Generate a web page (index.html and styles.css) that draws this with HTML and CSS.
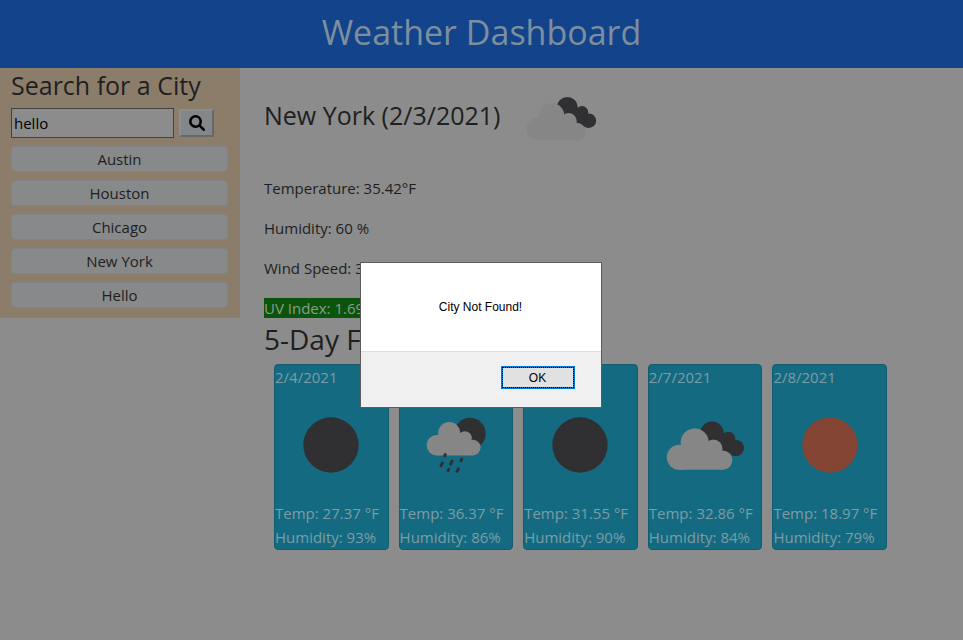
FILE: index.html
```html
<!DOCTYPE html>
<html lang="en">
<head>
<meta charset="utf-8">
<meta name="viewport" content="width=device-width, initial-scale=1">
<title>Weather Dashboard</title>
<link rel="stylesheet" href="styles.css">
</head>
<body>
<svg class="defs" aria-hidden="true">
  <symbol id="clouds" viewBox="0 0 100 100">
    <g class="dark"><circle cx="57" cy="38.3" r="11.7"/><circle cx="73.3" cy="43.7" r="7"/><circle cx="81" cy="53" r="8"/><path d="M57 28L70 42L80 50L80 61L60 54Z"/></g>
    <g class="cloud"><circle cx="24.3" cy="62.3" r="12.5"/><circle cx="39.7" cy="47.5" r="14"/><circle cx="58.5" cy="53.5" r="9"/><circle cx="67.7" cy="65.1" r="9.7"/><path d="M24.3 74.8V50H60L67.7 60V74.8Z"/></g>
  </symbol>
  <symbol id="rain" viewBox="0 0 100 100">
    <circle class="dark" cx="64" cy="38.5" r="15.7"/>
    <g class="cloud"><circle cx="30.8" cy="50.2" r="10.2"/><circle cx="43.2" cy="38" r="11"/><circle cx="58.8" cy="43.2" r="7"/><circle cx="66.8" cy="52.6" r="7.8"/><path d="M30.8 60.4V40H60L66.8 48V60.4Z"/></g>
    <path class="drops" d="M39.3 59.5L38.7 60.7M36.4 68L35 70.8M46 66.3L44.6 69M55.6 64.4L55 65.6M42.7 74.4L42.1 75.6M52.4 73.7L51 76.3"/>
  </symbol>
  <symbol id="disc" viewBox="0 0 100 100"><circle cx="50" cy="50" r="27.7"/></symbol>
</svg>

<header class="banner"><h1>Weather Dashboard</h1></header>

<div class="layout">
  <aside class="sidebar">
    <h2><label for="city">Search for a City</label></h2>
    <form class="search">
      <input id="city" type="text" value="hello">
      <button type="button" aria-label="Search">
        <svg viewBox="0 0 16 16" width="16" height="16" aria-hidden="true"><circle cx="6.5" cy="6.5" r="5.2"/><path d="M10.4 10.4L14.7 14.7"/></svg>
      </button>
    </form>
    <div class="cities">
      <button type="button">Austin</button>
      <button type="button">Houston</button>
      <button type="button">Chicago</button>
      <button type="button">New York</button>
      <button type="button">Hello</button>
    </div>
  </aside>

  <main class="main">
    <div class="current">
      <h2>New York (2/3/2021)</h2>
      <svg class="current-icon"><use href="#clouds"/></svg>
    </div>
    <p>Temperature: 35.42°F</p>
    <p>Humidity: 60 %</p>
    <p>Wind Speed: 3</p>
    <p class="uv"><span>UV Index: 1.69</span></p>
    <h2 class="forecast-title">5-Day Forecast:</h2>
    <div class="forecast">
      <article><div class="date">2/4/2021</div><svg class="dark"><use href="#disc"/></svg><div>Temp: 27.37 °F</div><div>Humidity: 93%</div></article>
      <article><div class="date"></div><svg><use href="#rain"/></svg><div>Temp: 36.37 °F</div><div>Humidity: 86%</div></article>
      <article><div class="date"></div><svg class="dark"><use href="#disc"/></svg><div>Temp: 31.55 °F</div><div>Humidity: 90%</div></article>
      <article><div class="date">2/7/2021</div><svg><use href="#clouds"/></svg><div>Temp: 32.86 °F</div><div>Humidity: 84%</div></article>
      <article><div class="date">2/8/2021</div><svg class="sun"><use href="#disc"/></svg><div>Temp: 18.97 °F</div><div>Humidity: 79%</div></article>
    </div>
  </main>
</div>

<div class="alert" role="alertdialog" aria-labelledby="alert-text">
  <p id="alert-text">City Not Found!</p>
  <div class="alert-actions"><button type="button">OK</button></div>
</div>
</body>
</html>
```
FILE: styles.css
```css
* { box-sizing: border-box; }

body {
  margin: 0;
  min-height: 100vh;
  background: #8c8c8c;
  color: #1d1f21;
  font: 15px/24px "Open Sans", "Noto Sans", sans-serif;
}

h1, h2, p { margin: 0; font-weight: 400; }

button, input { font: inherit; color: inherit; }

.defs { position: absolute; width: 0; height: 0; }

.dark { fill: #302f31; }
.sun { fill: #854535; }
.cloud { fill: #868686; }
.drops { fill: none; stroke: #302f31; stroke-width: 3; stroke-linecap: round; }

.banner {
  height: 68px;
  background: #13438a;
  color: #7d8f9f;
  text-align: center;
}

.banner h1 { font-size: 34px; line-height: 64px; }

.layout { display: flex; align-items: flex-start; }

.sidebar {
  flex: 0 0 240px;
  padding: 0 12px 10px 11px;
  background: #8c7d6b;
}

.sidebar h2 { font-size: 25px; line-height: 34px; padding-bottom: 6px; }

.search { display: flex; align-items: center; gap: 5px; }

.search input {
  width: 163px;
  height: 30px;
  padding: 0 2px;
  border: 1px solid #424242;
  background: #8c8c8c;
  color: #000;
}

.search button {
  display: grid;
  place-items: center;
  width: 35px;
  height: 28px;
  padding: 0;
  border: 2px solid;
  border-color: #8b8e90 #66686a #66686a #8b8e90;
  background: #84878a;
}

.search svg { fill: none; stroke: #000; stroke-width: 2.6; stroke-linecap: round; }

.cities { display: flex; flex-direction: column; gap: 8px; margin-top: 8px; }

.cities button {
  height: 26px;
  padding: 0;
  border: 1px solid #828487;
  border-radius: 4px;
  background: #88898a;
  line-height: 24px;
}

.main { flex: 1; min-width: 0; padding: 5px 0 0 24px; }

.current { display: flex; gap: 16px; margin-bottom: 13px; }
.current h2 { font-size: 25px; line-height: 84px; }
.current-icon { width: 90px; height: 90px; }

.main p { margin-bottom: 16px; }
.main .uv { margin-bottom: 0; }
.uv span { background: #0b540c; color: #8c9c8c; }

.forecast-title { font-size: 28px; line-height: 38px; margin-bottom: 6px; }

.forecast {
  display: grid;
  grid-template-columns: repeat(5, 1fr);
  gap: 10px;
  padding: 0 76px 0 10px;
}

.forecast article {
  border: 1px solid #125c70;
  border-radius: 4px;
  background: #146a80;
  color: #7b9da7;
  white-space: nowrap;
}

.date { min-height: 24px; }

.forecast svg { display: block; width: 100px; height: 112px; margin: 0 auto; }

.alert {
  position: fixed;
  top: 262px;
  left: 50%;
  width: 242px;
  margin-left: -122px;
  border: 1px solid #5c5c5c;
  background: #fff;
  color: #000;
  font: 12px/16px "Liberation Sans", Arial, sans-serif;
  text-align: center;
}

.alert p { padding: 36px 0; }

.alert-actions {
  display: flex;
  justify-content: flex-end;
  padding: 14px 26px 18px;
  border-top: 1px solid #dfdfdf;
  background: #f0f0f0;
}

.alert button {
  width: 74px;
  height: 23px;
  padding: 0;
  border: 2px solid #0078d7;
  outline: 1px dotted #000;
  outline-offset: -2px;
  background: #e1e1e1;
}
```
